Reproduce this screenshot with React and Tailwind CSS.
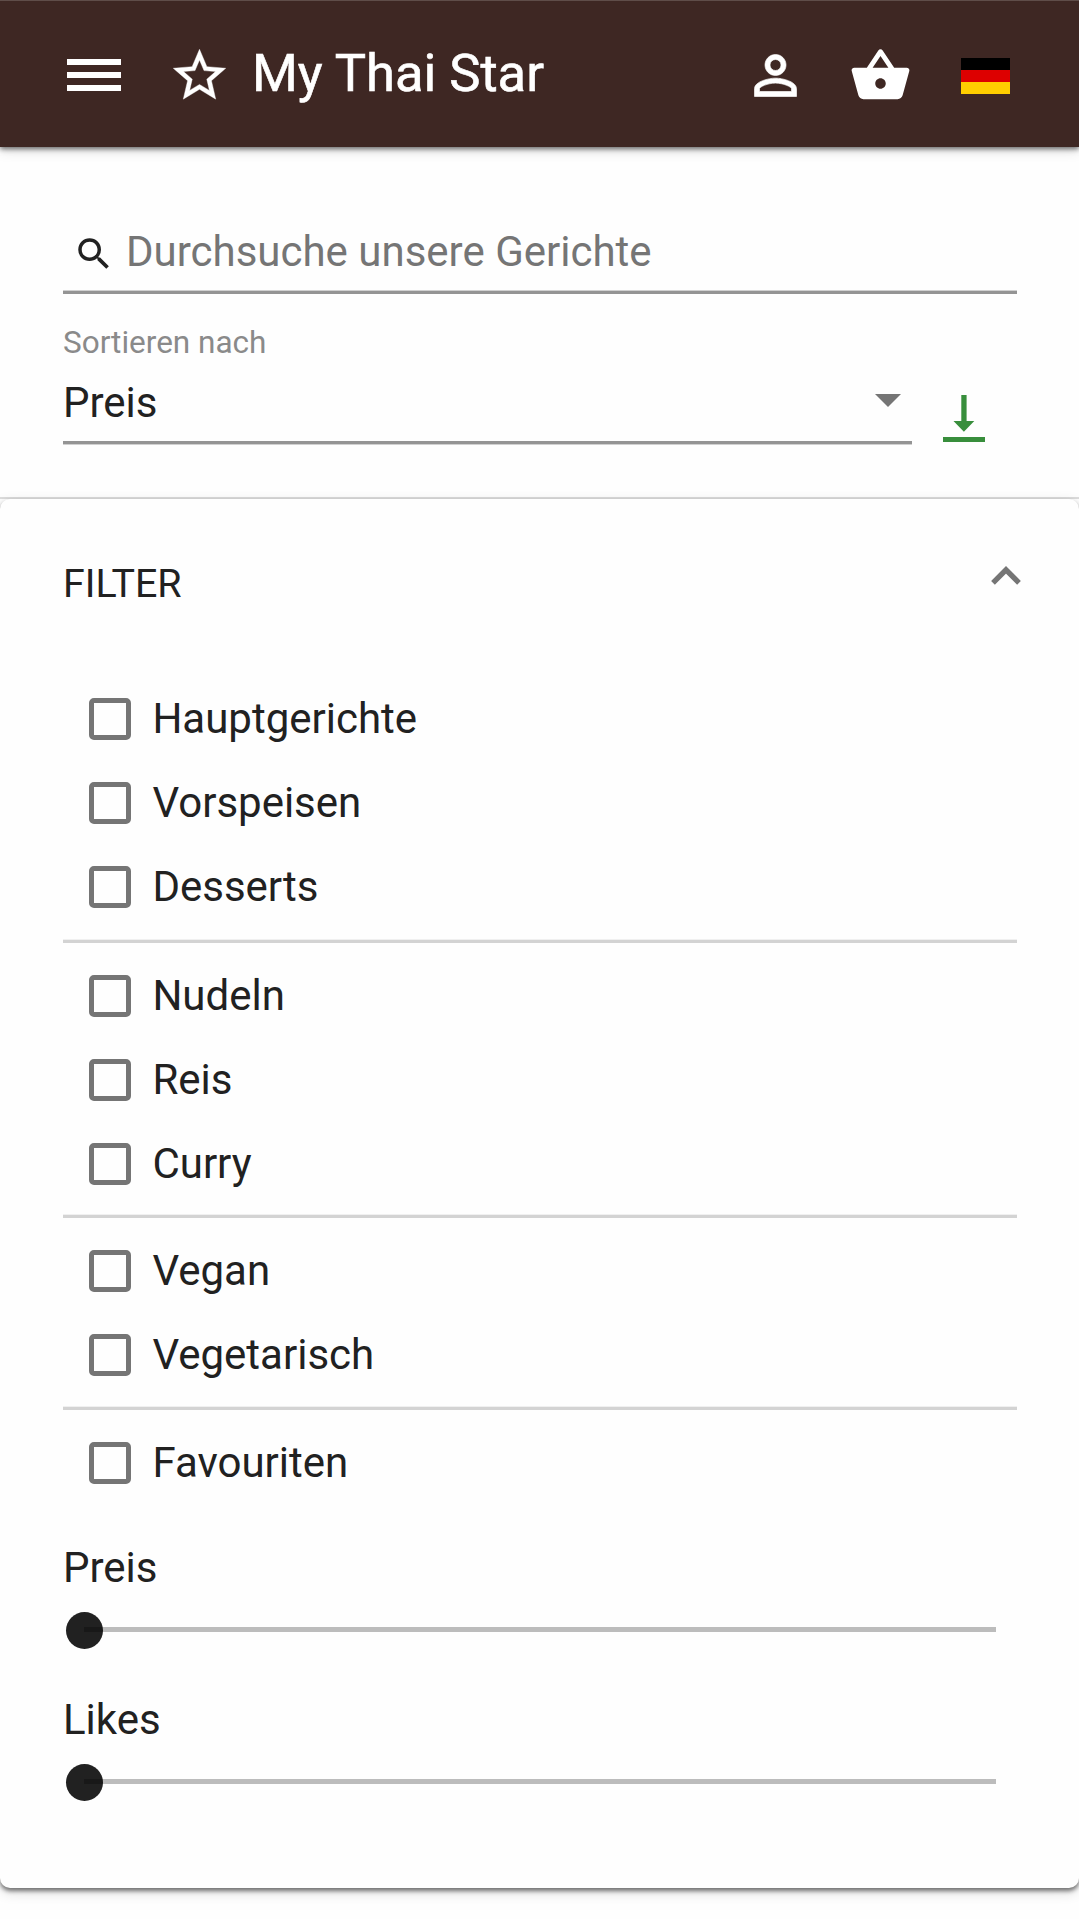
const filterGroups = [
  { names: ['Hauptgerichte', 'Vorspeisen', 'Desserts'], spacing: 'pt-[12px] pb-[11px]' },
  { names: ['Nudeln', 'Reis', 'Curry'], spacing: 'pt-[11px] pb-[9px]' },
  { names: ['Vegan', 'Vegetarisch'], spacing: 'pt-[11px] pb-[10px]' },
  { names: ['Favouriten'], spacing: 'pt-[11px]' },
];

function Header() {
  return (
    <header className="relative z-10 flex h-[147px] items-center border-t border-[#5f4d49] bg-[#3e2723] text-white shadow-[0_2px_5px_rgba(0,0,0,0.55),0_4px_12px_rgba(0,0,0,0.12)]">
      <svg className="mt-[1px] ml-[67px] h-[32px] w-[54px]" viewBox="0 0 54 32" fill="currentColor">
        <path d="M0 0h54v6H0zM0 13h54v6H0zM0 26h54v6H0z" />
      </svg>
      <svg className="mt-[3px] ml-[47px] h-[63px] w-[63px]" viewBox="0 0 24 24" fill="currentColor">
        <path d="M22 9.24l-7.19-.62L12 2 9.19 8.63 2 9.24l5.46 4.73L5.82 21 12 17.27 18.18 21l-1.63-7.03L22 9.24zM12 15.4l-3.76 2.27 1-4.28-3.32-2.88 4.38-.38L12 6.1l1.71 4.04 4.38.38-3.32 2.88 1 4.28L12 15.4z" stroke="currentColor" strokeWidth="0.15" />
      </svg>
      <h1 className="-mt-[3px] ml-[21px] text-[52.5px] leading-[60px] [-webkit-text-stroke:0.6px_white]">My Thai Star</h1>
      <div className="mr-[69px] ml-auto flex items-center pt-[3px]">
        <svg className="h-[63px] w-[63px]" viewBox="0 0 24 24" fill="currentColor">
          <path d="M12 5.9a2.1 2.1 0 110 4.2 2.1 2.1 0 010-4.2m0 9c2.97 0 6.1 1.46 6.1 2.1v1.1H5.9V17c0-.64 3.13-2.1 6.1-2.1M12 4C9.79 4 8 5.79 8 8s1.79 4 4 4 4-1.79 4-4-1.79-4-4-4zm0 9c-2.67 0-8 1.34-8 4v3h16v-3c0-2.66-5.33-4-8-4z" stroke="currentColor" strokeWidth="0.25" />
        </svg>
        <svg className="ml-[41.5px] h-[63px] w-[63px]" viewBox="0 0 24 24" fill="currentColor">
          <path d="M17.21 9l-4.38-6.56c-.19-.28-.51-.42-.83-.42-.32 0-.64.14-.83.43L6.79 9H2c-.55 0-1 .45-1 1 0 .09.01.18.04.27l2.54 9.27c.23.84 1 1.46 1.92 1.46h13c.92 0 1.69-.62 1.93-1.46l2.54-9.27L23 10c0-.55-.45-1-1-1h-4.79zM9 9l3-4.4L15 9H9zm3 8c-1.1 0-2-.9-2-2s.9-2 2-2 2 .9 2 2-.9 2-2 2z" />
        </svg>
        <div className="mt-[1px] ml-[49.5px] flex h-[37px] w-[49px] flex-col">
          <span className="flex-1 bg-black" />
          <span className="flex-1 bg-[#dd0000]" />
          <span className="flex-1 bg-[#ffce00]" />
        </div>
      </div>
    </header>
  );
}

function Search() {
  return (
    <section className="h-[352px] border-b-2 border-[#dcdcdc] pr-[62px] pl-[63px] pt-[73px]">
      <div className="flex h-[74px] items-center border-b-[3px] border-[#949494] pb-[10px] pl-[10px] shadow-[inset_0_-1px_0_#d0d0d0]">
        <svg className="mt-[6px] h-[42px] w-[42px] shrink-0" viewBox="0 0 24 24" fill="#212121">
          <path d="M15.5 14h-.79l-.28-.27A6.471 6.471 0 0016 9.5 6.5 6.5 0 109.5 16c1.61 0 3.09-.59 4.23-1.57l.27.28v.79l5 4.99L20.49 19l-4.99-5zm-6 0C7.01 14 5 11.99 5 9.5S7.01 5 9.5 5 14 7.01 14 9.5 11.99 14 9.5 14z" />
        </svg>
        <input
          className="mt-[1px] ml-[11px] h-[50px] min-w-0 flex-1 bg-transparent text-[42px] placeholder:text-[#757575] placeholder:opacity-100"
          placeholder="Durchsuche unsere Gerichte"
        />
      </div>
      <div className="flex">
        <div className="h-[150px] w-[849px] border-b-[3px] border-[#949494] pt-[30px] shadow-[0_1px_0_#d0d0d0]">
          <div className="text-[31.5px] leading-[38px] text-[#8a8a8a]">Sortieren nach</div>
          <div className="mt-[16px] flex items-start justify-between leading-[50px]">
            <span>Preis</span>
            <svg className="mt-[16px] mr-[11px] h-[13px] w-[26px]" viewBox="0 0 26 13" fill="#757575">
              <path d="M0 0h26L13 13z" />
            </svg>
          </div>
        </div>
        <svg className="mt-[101px] ml-[31px] h-[47px] w-[42px]" viewBox="0 0 42 47" fill="#388e3c">
          <path d="M18.3 0h5.3v26h7.7L20.9 36.7 10.5 26h7.8zM0 42h42v5H0z" />
        </svg>
      </div>
    </section>
  );
}

function Check({ name }) {
  return (
    <label className="flex h-[84px] items-center pl-[26.4px]">
      <span className="h-[42px] w-[42px] rounded-[5px] border-[5px] border-[#757575]" />
      <span className="ml-[21px] leading-[50px]">{name}</span>
    </label>
  );
}

function Slider({ label }) {
  return (
    <div className="h-[152px]">
      <div className="leading-[50px]">{label}</div>
      <div className="mt-[19px] flex items-center pl-[2.5px]">
        <span className="h-[37px] w-[37px] shrink-0 rounded-full bg-[#212121]" />
        <span className="-mt-[2px] mr-[21px] -ml-[18.5px] h-[5.3px] flex-1 bg-black/26" />
      </div>
    </div>
  );
}

export default function App() {
  return (
    <div className="h-[1919px] overflow-hidden bg-[#fefefe] font-[Roboto,sans-serif] text-[42px] text-[#212121]">
      <Header />
      <Search />
      <section className="h-[1389px] rounded-[10px] bg-[#fefefe] pr-[62px] pl-[63px] shadow-[0_3px_4px_rgba(0,0,0,0.5),0_4px_14px_rgba(0,0,0,0.14)]">
        <div className="flex h-[166px] items-start justify-between pt-[60px]">
          <h2 className="text-[39.4px] leading-[50px]">FILTER</h2>
          <svg className="mt-[7px] -mr-[4px] h-[19px] w-[30px]" viewBox="0 0 30 19" fill="none" stroke="#757575" strokeWidth="5.3">
            <path d="M2 16.8L15 3.8l13 13" />
          </svg>
        </div>
        <div>
          {filterGroups.map(({ names, spacing }, i) => (
            <div key={i} className={i ? 'border-t-[3px] border-[#d3d3d3] shadow-[0_-1px_0_#f0f0f0]' : ''}>
              <div className={spacing}>
                {names.map((name) => <Check key={name} name={name} />)}
              </div>
            </div>
          ))}
        </div>
        <div className="pt-[38px]">
          <Slider label="Preis" />
          <Slider label="Likes" />
        </div>
      </section>
    </div>
  );
}
